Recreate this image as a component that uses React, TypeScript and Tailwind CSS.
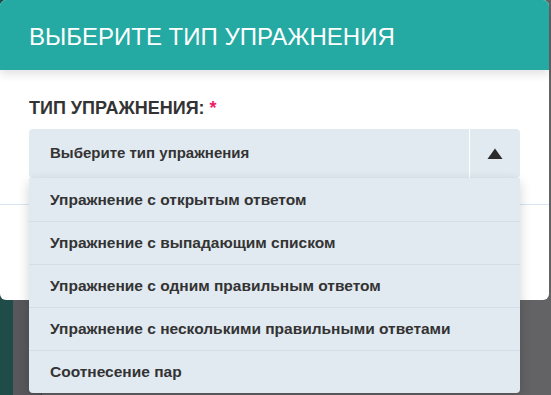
const items = [
  "Упражнение с открытым ответом",
  "Упражнение с выпадающим списком",
  "Упражнение с одним правильным ответом",
  "Упражнение с несколькими правильными ответами",
  "Соотнесение пар",
];

export default function App() {
  return (
    <div
      className="relative w-[551px] h-[395px] overflow-hidden bg-[#626264]"
      style={{ fontFamily: '"Liberation Sans", Arial, sans-serif' }}
    >
      {/* backdrop of the page behind the modal */}
      <div className="flex h-full">
        <div className="w-[13px] bg-[#1f4b48]" />
        <div className="w-[29px] bg-[#58585c] border-r border-[#4a4a4e]" />
        <div className="flex-1 bg-[#636365]" />
      </div>

      {/* modal */}
      <div className="absolute left-0 top-0 w-[549px] h-[300px] bg-white rounded-md flex flex-col">
        <div className="h-[70px] bg-[#24aaa3] rounded-t-md flex items-center pl-[29px] shadow-[0_4px_10px_rgba(0,0,0,0.12)] relative z-10">
          <h1 className="text-white text-[24px] font-light mt-[4px]">ВЫБЕРИТЕ ТИП УПРАЖНЕНИЯ</h1>
        </div>
        <div className="px-[29px] pt-[28px] h-[134px]">
          <div className="text-[18px] font-bold text-[#333] leading-[20px]">
            ТИП УПРАЖНЕНИЯ: <span className="text-[#ec1e6a]">*</span>
          </div>
          <div className="relative mt-[11px]">
            <div className="h-[49px] bg-[#e1e9f1] rounded-[4px] flex items-center">
              <div className="flex-1 pl-[21px] text-[15px] font-bold text-[#333]">Выберите тип упражнения</div>
              <div className="w-[51px] h-full border-l border-white flex items-center justify-center">
                <svg width="16" height="12" viewBox="0 0 16 12">
                  <polygon points="8,0.5 15.5,11 0.5,11" fill="#2b2b2b" />
                </svg>
              </div>
            </div>
            {/* open dropdown list */}
            <div className="absolute left-0 right-0 top-[49px] z-20 bg-[#e1e9f1] rounded-b-[4px] shadow-[0_4px_12px_rgba(0,0,0,0.18)]">
              {items.map((t, i) => (
                <div
                  key={t}
                  className={
                    "h-[43px] flex items-center pl-[21px] text-[15.5px] font-bold text-[#333] " +
                    (i > 0 ? "border-t border-[#d2dfe7]" : "")
                  }
                >
                  {t}
                </div>
              ))}
            </div>
          </div>
        </div>
        <div className="flex-1 border-t border-[#d8e6f5]" />
      </div>
    </div>
  );
}
